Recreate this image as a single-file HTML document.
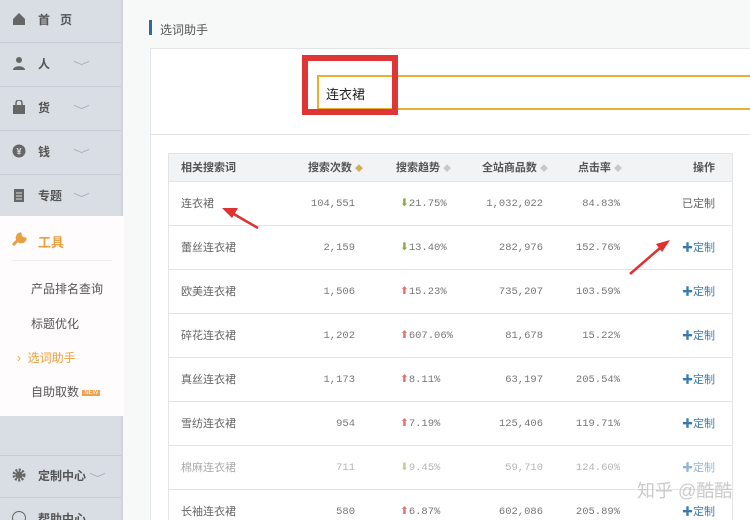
<!DOCTYPE html>
<html><head><meta charset="utf-8"><style>
*{margin:0;padding:0;box-sizing:border-box}
html,body{width:750px;height:520px;overflow:hidden}
body{background:#f7f8f8;font-family:"Liberation Sans","Noto Sans CJK SC",sans-serif;position:relative;color:#555}
.sb{position:absolute;left:0;top:0;width:123px;height:520px;background:#d9dee4;border-right:2px solid #cfd4da}
.it{position:absolute;left:0;width:121px;height:43px;border-bottom:1px solid #c6ccd3;font-size:12px;font-weight:bold;color:#555}
.it .ic{position:absolute;left:12px;top:12px;width:14px;height:14px}
.it .t{position:absolute;left:38px;top:11px}
.it .v{position:absolute;left:76px;top:14px;color:#aab;font-weight:normal;font-size:11px;transform:scaleX(1.5)}
.white{position:absolute;left:0;top:216px;width:124px;height:200px;background:#fefcfd}
.sub{position:absolute;left:31px;font-size:12px;color:#555}
.main{position:absolute;left:150px;top:48px;width:600px;height:472px;background:#fff;border:1px solid #e3e5e8;border-right:none;border-bottom:none}
table{position:absolute;left:168px;top:153px;width:565px;border-collapse:collapse;font-size:11px;table-layout:fixed}
td,th{height:44px;border-bottom:1px solid #e2e4e6;font-weight:normal;color:#666;white-space:nowrap}
th{height:28px;background:#f2f3f4;font-weight:bold;color:#555;font-size:11px}
tr td:first-child,tr th:first-child{padding-left:13px;text-align:left}
.n{font-family:"Liberation Mono",monospace;font-size:10.5px;color:#777;padding-top:1px}
.c2{text-align:right;padding-right:8px}
.c3{text-align:left;padding-left:37px}
.c4{text-align:right;padding-right:5px}
.c5{text-align:right;padding-right:6px}
.c6{text-align:right;padding-right:18px}
.up{color:#e07070}.dn{color:#8aaa40}
.op{color:#3a7bb0}
.s{color:#c8c8c8;font-size:8px}
</style></head><body>
<div class="sb">
 <div class="it" style="top:0"><svg class="ic" viewBox="0 0 14 14"><path d="M1 7L7 1l6 6v6H1z" fill="#666"/></svg><span class="t">首&nbsp;&nbsp;&nbsp;页</span></div>
 <div class="it" style="top:44px"><svg class="ic" viewBox="0 0 14 14"><circle cx="7" cy="4" r="3" fill="#666"/><path d="M1 14c0-5 12-5 12 0z" fill="#666"/></svg><span class="t">人</span><span class="v">﹀</span></div>
 <div class="it" style="top:88px"><svg class="ic" viewBox="0 0 14 14"><rect x="1" y="5" width="12" height="9" fill="#666"/><path d="M4 5V3a3 3 0 016 0v2" stroke="#666" fill="none" stroke-width="1.5"/></svg><span class="t">货</span><span class="v">﹀</span></div>
 <div class="it" style="top:132px"><svg class="ic" viewBox="0 0 14 14"><circle cx="7" cy="7" r="6.5" fill="#666"/><text x="7" y="10.5" font-size="9" text-anchor="middle" fill="#d9dee4">¥</text></svg><span class="t">钱</span><span class="v">﹀</span></div>
 <div class="it" style="top:176px"><svg class="ic" viewBox="0 0 14 14"><rect x="2" y="1" width="10" height="13" fill="#666"/><path d="M4 5h6M4 8h6M4 11h6" stroke="#d9dee4"/></svg><span class="t">专题</span><span class="v">﹀</span></div>
 <div class="it" style="top:455px;border-top:1px solid #c6ccd3"><svg class="ic" viewBox="0 0 14 14"><circle cx="7" cy="7" r="5" fill="none" stroke="#666" stroke-width="3" stroke-dasharray="2 1.3"/><circle cx="7" cy="7" r="3.5" fill="#666"/></svg><span class="t">定制中心</span><span class="v" style="left:92px">﹀</span></div>
 <div class="it" style="top:499px"><span class="ic" style="border:1px solid #666;border-radius:50%"></span><span class="t">帮助中心</span></div>
</div>
<div class="white">
 <svg style="position:absolute;left:11px;top:16px" width="16" height="14" viewBox="0 0 16 14"><path d="M2 13L10 5M9 2a4 4 0 105 5l-3-1-1-1z" stroke="#e8a040" stroke-width="3" fill="#e8a040"/></svg>
 <span style="position:absolute;left:38px;top:16px;font-size:13px;font-weight:bold;color:#e8a040">工具</span>
 <div style="position:absolute;left:12px;top:44px;width:100px;border-top:1px solid #eee"></div>
 <span class="sub" style="top:64px">产品排名查询</span>
 <span class="sub" style="top:99px">标题优化</span>
 <span class="sub" style="top:133px;color:#e8a040;left:17px">›&nbsp;&nbsp;选词助手</span>
 <span class="sub" style="top:167px">自助取数 <span style="background:#f0a050;color:#fff;font-size:6px;padding:0 2px;vertical-align:2px">NEW</span></span>
</div>
<div style="position:absolute;left:149px;top:20px;width:3px;height:15px;background:#2f6b9a"></div>
<div style="position:absolute;left:160px;top:21px;font-size:12px;color:#555">选词助手</div>
<div class="main"></div>
<div style="position:absolute;left:150px;top:134px;width:600px;border-top:1px solid #e3e5e8"></div>
<div style="position:absolute;left:317px;top:75px;width:440px;height:35px;border:2px solid #e8b030;background:#fff"></div>
<div style="position:absolute;left:302px;top:55px;width:96px;height:60px;border:6px solid #e03535"></div>
<div style="position:absolute;left:326px;top:84px;font-size:13px;color:#222">连衣裙</div>
<table>
<colgroup><col style="width:125px"><col style="width:70px"><col style="width:100px"><col style="width:85px"><col style="width:78px"><col></colgroup>
<tr><th>相关搜索词</th><th style="text-align:right">搜索次数 <span class="s" style="color:#d0b050">◆</span></th><th style="text-align:left;padding-left:33px">搜索趋势 <span class="s">◆</span></th><th style="text-align:right">全站商品数 <span class="s">◆</span></th><th style="text-align:right;padding-right:4px">点击率 <span class="s">◆</span></th><th class="c6">操作</th></tr>
<tr><td>连衣裙</td><td class="n c2">104,551</td><td class="n c3"><span class="dn">⬇</span>21.75%</td><td class="n c4">1,032,022</td><td class="n c5">84.83%</td><td class="c6">已定制</td></tr>
<tr><td>蕾丝连衣裙</td><td class="n c2">2,159</td><td class="n c3"><span class="dn">⬇</span>13.40%</td><td class="n c4">282,976</td><td class="n c5">152.76%</td><td class="op c6"><b>✚</b>定制</td></tr>
<tr><td>欧美连衣裙</td><td class="n c2">1,506</td><td class="n c3"><span class="up">⬆</span>15.23%</td><td class="n c4">735,207</td><td class="n c5">103.59%</td><td class="op c6"><b>✚</b>定制</td></tr>
<tr><td>碎花连衣裙</td><td class="n c2">1,202</td><td class="n c3"><span class="up">⬆</span>607.06%</td><td class="n c4">81,678</td><td class="n c5">15.22%</td><td class="op c6"><b>✚</b>定制</td></tr>
<tr><td>真丝连衣裙</td><td class="n c2">1,173</td><td class="n c3"><span class="up">⬆</span>8.11%</td><td class="n c4">63,197</td><td class="n c5">205.54%</td><td class="op c6"><b>✚</b>定制</td></tr>
<tr><td>雪纺连衣裙</td><td class="n c2">954</td><td class="n c3"><span class="up">⬆</span>7.19%</td><td class="n c4">125,406</td><td class="n c5">119.71%</td><td class="op c6"><b>✚</b>定制</td></tr>
<tr style="opacity:.55"><td>棉麻连衣裙</td><td class="n c2">711</td><td class="n c3"><span class="dn">⬇</span>9.45%</td><td class="n c4">59,710</td><td class="n c5">124.60%</td><td class="op c6"><b>✚</b>定制</td></tr>
<tr><td>长袖连衣裙</td><td class="n c2">580</td><td class="n c3"><span class="up">⬆</span>6.87%</td><td class="n c4">602,086</td><td class="n c5">205.89%</td><td class="op c6"><b>✚</b>定制</td></tr>
</table>
<div style="position:absolute;left:168px;top:153px;width:565px;height:367px;border:1px solid #e2e4e6;border-bottom:none;pointer-events:none"></div>
<svg style="position:absolute;left:0;top:0" width="750" height="520">
<line x1="258" y1="228" x2="232" y2="213" stroke="#e03030" stroke-width="2.5"/><path d="M222 208l16 0-6 10z" fill="#e03030"/>
<line x1="630" y1="274" x2="660" y2="248" stroke="#e03030" stroke-width="2.5"/><path d="M670 240l-14 4 6 8z" fill="#e03030"/>
</svg>
<div style="position:absolute;left:637px;top:477px;font-size:18px;color:rgba(190,190,190,.8);white-space:nowrap">知乎 @酷酷</div>
</body></html>
